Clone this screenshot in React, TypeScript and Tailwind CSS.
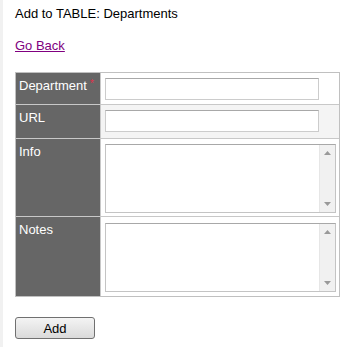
import React from "react";

function FakeTextarea({ h }: { h: number }) {
  return (
    <div
      className="flex w-[231px] border border-[#c4c4c4] border-t-[#a8a8a8] bg-white"
      style={{ height: h }}
    >
      <div className="flex-1" />
      <div className="flex w-[16px] flex-col items-center justify-between bg-[#f1f1f1] py-[6px] border-l border-[#e6e6e6]">
        <svg width="7" height="4" viewBox="0 0 7 4">
          <path d="M0 4 L3.5 0 L7 4 Z" fill="#9a9a9a" />
        </svg>
        <svg width="7" height="4" viewBox="0 0 7 4">
          <path d="M0 0 L3.5 4 L7 0 Z" fill="#9a9a9a" />
        </svg>
      </div>
    </div>
  );
}

function Label({ children, req }: { children: React.ReactNode; req?: boolean }) {
  return (
    <div className="w-[84px] bg-[#666666] pl-[3px] pt-[5px] text-[13px] leading-[15px] text-white">
      {children}
      {req && (
        <span className="relative top-[-3px] ml-[3px] text-[10px] text-[#e0304a]">*</span>
      )}
    </div>
  );
}

export default function App() {
  return (
    <div
      className="flex h-[347px] w-[355px] bg-white text-black"
      style={{ fontFamily: '"Liberation Sans", Arial, sans-serif' }}
    >
      <div className="w-[3px] bg-[#f1f1f1]" />
      <div className="flex flex-col pl-[12px]">
        <div className="mt-[6px] text-[13px] leading-[15px]">Add to TABLE: Departments</div>
        <a
          href="#"
          className="mt-[17px] w-fit text-[13px] leading-[15px] text-[#800080] underline"
        >
          Go Back
        </a>
        <div className="mt-[19px] flex w-[325px] flex-col border border-[#c0c0c0]">
          {/* Department */}
          <div className="flex h-[32px] border-b border-[#c8c8c8]">
            <Label req>Department</Label>
            <div className="flex-1 border-l border-[#c8c8c8] bg-white pl-[4px] pt-[5px]">
              <div className="h-[22px] w-[214px] border border-[#cccccc] border-t-[#a8a8a8] bg-white" />
            </div>
          </div>
          {/* URL */}
          <div className="flex h-[34px] border-b border-[#c8c8c8]">
            <Label>URL</Label>
            <div className="flex-1 border-l border-[#c8c8c8] bg-[#f4f4f4] pl-[4px] pt-[5px]">
              <div className="h-[22px] w-[214px] border border-[#cccccc] border-t-[#a8a8a8] bg-white" />
            </div>
          </div>
          {/* Info */}
          <div className="flex h-[78px] border-b border-[#c8c8c8]">
            <Label>Info</Label>
            <div className="flex-1 border-l border-[#c8c8c8] bg-white pl-[4px] pt-[5px]">
              <FakeTextarea h={69} />
            </div>
          </div>
          {/* Notes */}
          <div className="flex h-[79px]">
            <Label>Notes</Label>
            <div className="flex-1 border-l border-[#c8c8c8] bg-white pl-[4px] pt-[6px]">
              <FakeTextarea h={69} />
            </div>
          </div>
        </div>
        <button className="mt-[20px] h-[22px] w-[80px] rounded-[3px] border border-[#707070] bg-gradient-to-b from-[#f4f4f4] to-[#dadada] text-[13px] leading-[15px] text-black">
          Add
        </button>
      </div>
    </div>
  );
}
